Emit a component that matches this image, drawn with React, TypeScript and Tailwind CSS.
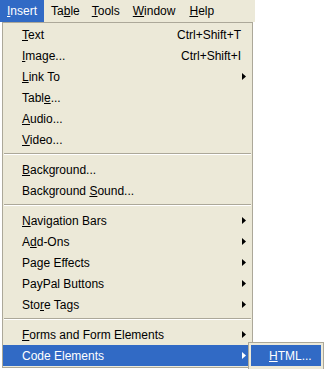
import React from 'react';

type Item = {
  label: React.ReactNode;
  shortcut?: string;
  sub?: boolean;
  active?: boolean;
};

const groups: Item[][] = [
  [
    { label: <><u>T</u>ext</>, shortcut: 'Ctrl+Shift+T' },
    { label: <><u>I</u>mage...</>, shortcut: 'Ctrl+Shift+I' },
    { label: <><u>L</u>ink To</>, sub: true },
    { label: <>Tabl<u>e</u>...</> },
    { label: <><u>A</u>udio...</> },
    { label: <><u>V</u>ideo...</> },
  ],
  [
    { label: <><u>B</u>ackground...</> },
    { label: <>Background <u>S</u>ound...</> },
  ],
  [
    { label: <><u>N</u>avigation Bars</>, sub: true },
    { label: <>A<u>d</u>d-Ons</>, sub: true },
    { label: <>Pa<u>g</u>e Effects</>, sub: true },
    { label: <>PayPal Buttons</>, sub: true },
    { label: <>Sto<u>r</u>e Tags</>, sub: true },
  ],
  [
    { label: <><u>F</u>orms and Form Elements</>, sub: true },
    { label: <>Code Elements</>, sub: true, active: true },
  ],
];

function Arrow({ white }: { white?: boolean }) {
  return (
    <svg width="4" height="7" viewBox="0 0 4 7" className="shrink-0">
      <path d="M0 0 L4 3.5 L0 7 Z" fill={white ? '#ffffff' : '#000000'} />
    </svg>
  );
}

function Row({ item }: { item: Item }) {
  return (
    <div
      className={`h-[21px] flex items-center pl-[19px] pr-[6px] ${
        item.active ? 'bg-[#316ac5] text-white' : 'text-black'
      }`}
    >
      <span className="flex-1 whitespace-nowrap">{item.label}</span>
      {item.shortcut && <span className="mr-[5px] whitespace-nowrap">{item.shortcut}</span>}
      {item.sub && <Arrow white={item.active} />}
    </div>
  );
}

export default function App() {
  return (
    <div
      className="relative w-[325px] h-[369px] bg-white overflow-hidden text-[12px] leading-none"
      style={{ fontFamily: '"Liberation Sans", Arial, sans-serif' }}
    >
      <div className="w-[255px] h-[22px] bg-[#ece9d8] flex items-stretch">
        <div className="px-[7px] flex items-center bg-[#316ac5] text-white">
          <span><u>I</u>nsert</span>
        </div>
        <div className="pl-[7px] pr-[6px] flex items-center">
          <span>Ta<u>b</u>le</span>
        </div>
        <div className="px-[6px] flex items-center">
          <span><u>T</u>ools</span>
        </div>
        <div className="px-[7px] flex items-center">
          <span><u>W</u>indow</span>
        </div>
        <div className="px-[7px] flex items-center">
          <span><u>H</u>elp</span>
        </div>
      </div>

      <div className="ml-[2px] w-[251px] bg-[#ece9d8] border border-[#aca899] py-[1px]">
        {groups.map((g, gi) => (
          <div key={gi}>
            {gi > 0 && (
              <div className="h-[9px] pt-[3px] px-[1px]">
                <div className="h-[2px] border-t border-[#aca899] border-b border-b-white" />
              </div>
            )}
            {g.map((it, i) => (
              <Row key={i} item={it} />
            ))}
          </div>
        ))}
      </div>

      <div className="absolute left-[248px] top-[342px] w-[76px] h-[30px] bg-[#ece9d8] border border-[#aca899] p-[2px]">
        <div className="h-[21px] bg-[#316ac5] text-white flex items-center pl-[18px]">
          <span><u>H</u>TML...</span>
        </div>
      </div>
    </div>
  );
}
